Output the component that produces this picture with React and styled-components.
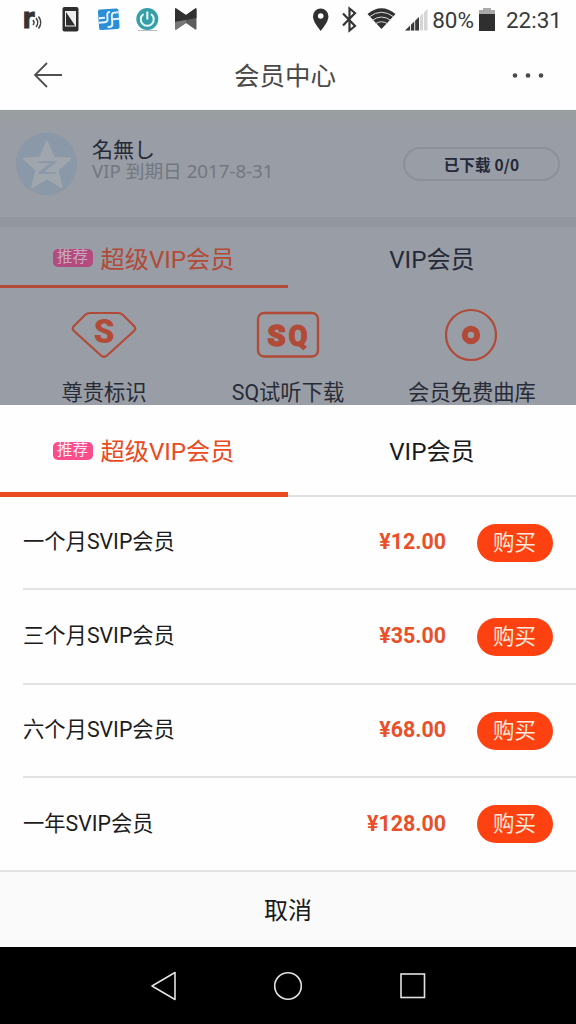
import React from 'react'
import styled, { createGlobalStyle } from 'styled-components'

const GlobalStyle = createGlobalStyle`
  * { box-sizing: border-box; }
  body {
    margin: 0;
    background: #000;
    font-family: Roboto, "Noto Sans CJK SC", sans-serif;
  }
  svg { display: block; }
`

const Phone = styled.div`
  width: 576px;
  height: 1024px;
  display: flex;
  flex-direction: column;
  overflow: hidden;
  background: #fefefe;
`

const StatusBar = styled.div`
  height: 40px;
  flex: none;
  display: flex;
  align-items: center;
  justify-content: space-between;
  color: #3a3a3a;
`

const TitleBar = styled.header`
  height: 70px;
  flex: none;
  display: grid;
  grid-template-columns: 96px 1fr 96px;
  align-items: center;
  justify-items: center;
  border-bottom: 1px solid #f3f6f8;
  h1 {
    margin: 3px 0 0 -6px;
    font-size: 25.5px;
    font-weight: 400;
    line-height: 36px;
    color: #4a4a4a;
  }
`

const StatusText = styled.span`
  font-size: 22.5px;
  line-height: 40px;
`

const StatusRight = styled.div`
  display: flex;
  align-items: center;
  padding-right: 14px;
`

const Dimmed = styled.section`
  height: 295px;
  flex: none;
  overflow: hidden;
  background: linear-gradient(#98a09f, #9a9ea2 10px, #999da5 20px);
`

const Profile = styled.div`
  height: 107px;
  display: flex;
  align-items: center;
  padding: 0 16px;
`

const Names = styled.div`
  flex: 1;
  margin: -9px 0 0 14px;
  font-family: "Noto Sans CJK JP", sans-serif;
  .name {
    font-size: 21px;
    line-height: 23px;
    color: #262a38;
  }
  .expire {
    font-family: "Noto Sans", "Noto Sans CJK JP", sans-serif;
    font-size: 18.7px;
    line-height: 22px;
    color: #727880;
  }
`

const Downloaded = styled.div`
  width: 157px;
  height: 34px;
  border: 2px solid #8c9099;
  border-radius: 17px;
  text-align: center;
  font: bold 15.5px/31px "Noto Sans CJK SC", sans-serif;
  letter-spacing: 0.2px;
  color: #23283a;
`

const Band = styled.div`
  height: 10px;
  background: #92969f;
`

const Tabs = styled.div`
  display: grid;
  grid-template-columns: 1fr 1fr;
  height: ${p => p.$height}px;
  border-bottom: ${p => (p.$line ? '2px solid #e0e0e0' : 'none')};
`

const Tab = styled.div`
  display: flex;
  align-items: center;
  justify-content: center;
  gap: 7px;
  font-size: 24.2px;
  padding-top: ${p => p.$drop || 0}px;
  padding-bottom: ${p => p.$lift || 0}px;
  color: ${p => p.$color};
  border-bottom: ${p => (p.$active ? `${p.$bar}px solid ${p.$barColor}` : 'none')};
  margin-bottom: ${p => (p.$overlap ? '-2px' : '0')};
`

const Badge = styled.span`
  width: 40px;
  height: 18px;
  margin: 2px 1px 0 -1px;
  border-radius: 5px;
  background: ${p => (p.$dim ? '#b34a80' : '#fb4d8b')};
  color: ${p => (p.$dim ? '#c9a9bb' : '#ffe9f2')};
  font-size: 15.5px;
  line-height: 17px;
  text-align: center;
`

const Perks = styled.div`
  display: grid;
  grid-template-columns: 208px 160px 208px;
  padding-top: 20px;
`

const Perk = styled.div`
  display: flex;
  flex-direction: column;
  align-items: center;
  gap: 16px;
  font-size: 21.3px;
  line-height: 30px;
  white-space: nowrap;
  color: #282c38;
`

const Sheet = styled.section`
  height: 542px;
  flex: none;
  background: #fefefe;
`

const Plan = styled.div`
  height: ${p => p.$height}px;
  margin-left: 23px;
  padding-right: 23px;
  display: flex;
  align-items: center;
  border-bottom: ${p => (p.$last ? 'none' : '2px solid #e1e3e4')};
  .label {
    flex: 1;
    padding-bottom: 6px;
    font-size: 21.3px;
    color: #1c1c1c;
  }
`

const Price = styled.span`
  margin: -2px 31px 0 0;
  font-size: 21.4px;
  font-weight: 700;
  color: #e9502a;
`

const Buy = styled.button`
  width: 76px;
  height: 38px;
  padding: 0 1px 1px 0;
  border: none;
  border-radius: 19px;
  background: #fe4110;
  color: #ffeadb;
  font: 400 21.5px/37px Roboto, "Noto Sans CJK SC", sans-serif;
`

const Cancel = styled.div`
  height: 77px;
  border-top: 2px solid #e2e2e2;
  background: #fafafa;
  text-align: center;
  font-size: 24px;
  line-height: 78px;
  color: #191919;
`

const NavBar = styled.nav`
  height: 77px;
  flex: none;
  background: #000;
  display: flex;
  justify-content: center;
  align-items: center;
  gap: 94px;
`

const plans = [
  { label: '一个月SVIP会员', price: '¥12.00', height: 93 },
  { label: '三个月SVIP会员', price: '¥35.00', height: 95 },
  { label: '六个月SVIP会员', price: '¥68.00', height: 93 },
  { label: '一年SVIP会员', price: '¥128.00', height: 92 },
]

const NotificationIcons = () => (
  <svg width="220" height="40" viewBox="0 0 220 40">
    <text x="22.500" y="27.500" textLength="12" lengthAdjust="spacingAndGlyphs" fontFamily="DejaVu Sans, sans-serif" fontWeight="700" fontSize="28" fill="#333" stroke="#333">r</text>
    <g fill="none" stroke="#444" strokeWidth="1.500">
      <path d="M33 20q2 2.500 0 5M36 18q3.500 4.500 0 9M38.500 16.500q4.500 6 0 12" />
    </g>
    <rect x="62.500" y="7" width="16" height="24.500" rx="2" fill="#2e2e2e" />
    <rect x="65" y="11" width="11" height="15.500" fill="#eee" />
    <path d="M66 12 75 25.500H66z" fill="#2e2e2e" />
    <g transform="rotate(-4 109 19)">
      <rect x="98.500" y="9" width="20.500" height="20.500" rx="2" fill="#2b8fd8" />
      <path d="M119 13h-4q-3 0-3 3v8q0 3-3 3h-2M98.500 22h6q3 0 3-3v-4q0-3 3-3M99 17.500h6M113 19.500h6" fill="none" stroke="#e8f5ff" strokeWidth="1.900" />
    </g>
    <path d="M138 30.500h19" stroke="#bbb" />
    <circle cx="147.300" cy="19" r="11" fill="#359fa8" />
    <path d="M143.500 14a6.500 6.500 0 1 0 7.500 0M147.300 11.500v8" fill="none" stroke="#eafafa" strokeWidth="2" />
    <path d="M175 9.500q0-2 2-.5l9 6 8.500-6q2-1.500 2 .5v19q0 2-2 .5l-8.500-6-9 6q-2 1.500-2-.5z" fill="#5c5c5c" />
    <path d="M175 9.500q0-2 2-.5l9 6 8.500-6q2-1.500 2 .5v8.500L186 20l-11 2z" fill="#303030" />
    <path d="M175 22l11-2v3l-9 6q-2 1.500-2-.5z" fill="#777" />
  </svg>
)

const SystemIcons = () => (
  <svg width="122" height="40" viewBox="310 0 122 40">
    <path d="M320.700 31c-4-5-7.700-10-7.700-14.700a7.700 7.700 0 0 1 15.400 0C328.400 21 324.700 26 320.700 31z" fill="#303030" />
    <circle cx="320.700" cy="16" r="2.800" fill="#fefefe" />
    <path d="M343 13.500l12 12.500-5.500 4.500V8.500L355 13l-12 12.500" fill="none" stroke="#353535" strokeWidth="2.200" />
    <path d="M367.500 14q14-11.500 28 0L381.500 29z" fill="#303030" />
    <path d="M369 17q12.500-9.500 25 0M372 20.500q9.500-7 19 0M375 24q6.500-4.500 13 0" fill="none" stroke="#ddd" strokeWidth="1" />
    <path d="M405 30.500 427.500 9v21.500z" fill="#d6d6d6" />
    <path d="M405 30.500 419 17v13.500z" fill="#3a3a3a" />
    <path d="M410.500 20v11M414.700 16v15M419.500 12v19M423.500 9v22" stroke="#fefefe" strokeWidth="0.900" />
  </svg>
)

const Battery = styled.svg`
  margin: 0 10px 0 5px;
`

const Avatar = () => (
  <svg width="62" height="64" viewBox="0 0 62 64">
    <ellipse cx="30.500" cy="32" rx="30.500" ry="31.500" fill="#8b98a8" />
    <path d="M31 10l6.500 15.500 16.500 1.200-12.500 11.500 4 17L31 46.500 16 55.200l4.500-17L8 26.700l16-1.200z" fill="#9fa6ad" stroke="#9fa6ad" strokeWidth="2" strokeLinejoin="round" />
    <text x="31" y="42" textAnchor="middle" textLength="20" lengthAdjust="spacingAndGlyphs" fontFamily="Roboto, sans-serif" fontSize="18" fontWeight="500" fill="#8b98a8">Z</text>
  </svg>
)

const perkRed = '#b24a38'

const DiamondIcon = () => (
  <svg width="66" height="54" viewBox="0 0 66 54">
    <path d="M19 5h28q3 0 5 2l11 11q2.500 2.500 0 5L36 47.500q-3 2.500-6 0L3 23q-2.500-2.500 0-5L14 7q2-2 5-2z" fill="none" stroke={perkRed} strokeWidth="2.200" />
    <text x="33" y="35" textAnchor="middle" fontFamily="Roboto, sans-serif" fontWeight="900" fontSize="33" fill={perkRed}>S</text>
  </svg>
)

const SqIcon = () => (
  <svg width="64" height="54" viewBox="0 0 64 54">
    <rect x="2" y="5" width="60" height="43.500" rx="6" fill="none" stroke={perkRed} strokeWidth="2.400" />
    <text x="11.500" y="37.500" textLength="18" lengthAdjust="spacingAndGlyphs" fontFamily="Roboto, sans-serif" fontWeight="900" fontSize="29" fill={perkRed} stroke={perkRed} strokeWidth="1.500">S</text>
    <text x="32.500" y="37.500" textLength="19" lengthAdjust="spacingAndGlyphs" fontFamily="Roboto, sans-serif" fontWeight="900" fontSize="29" fill={perkRed} stroke={perkRed}>Q</text>
  </svg>
)

const DiscIcon = () => (
  <svg width="54" height="54" viewBox="0 0 54 54">
    <circle cx="26" cy="27" r="25" fill="none" stroke={perkRed} strokeWidth="2.200" />
    <circle cx="26" cy="27" r="6.200" fill="none" stroke={perkRed} strokeWidth="6" />
  </svg>
)

const App = () => {
  return (
    <>
      <GlobalStyle />
      <Phone>
        <StatusBar>
          <NotificationIcons />
          <StatusRight>
            <SystemIcons />
            <StatusText>80%</StatusText>
            <Battery width="17" height="40" viewBox="0 0 17 40">
              <path d="M4 8h8v2h4v5H0v-5h4z" fill="#aaa" />
              <path d="M0 14h16v17H0z" fill="#2f2f2f" />
            </Battery>
            <StatusText>22:31</StatusText>
          </StatusRight>
        </StatusBar>
        <TitleBar>
          <svg width="30" height="28" viewBox="0 0 30 28" fill="none" stroke="#505050" strokeWidth="1.800">
            <path d="M29 14H2M14 2 2 14l12 12" />
          </svg>
          <h1>会员中心</h1>
          <svg width="32" height="8" viewBox="0 0 32 8" fill="#4a4a4a">
            <circle cx="3" cy="4.500" r="2.300" />
            <circle cx="16" cy="4.500" r="2.300" />
            <circle cx="29" cy="4.500" r="2.300" />
          </svg>
        </TitleBar>
        <Dimmed>
          <Profile>
            <Avatar />
            <Names>
              <div className='name'>名無し</div>
              <div className='expire'>VIP 到期日 2017-8-31</div>
            </Names>
            <Downloaded>已下载 0/0</Downloaded>
          </Profile>
          <Band />
          <Tabs $height={61}>
            <Tab $active $drop={2} $bar={3} $barColor='#b24a38' $color='#b24a38'>
              <Badge $dim>推荐</Badge>
              超级VIP会员
            </Tab>
            <Tab $color='#262a38' $lift={1}>VIP会员</Tab>
          </Tabs>
          <Perks>
            <Perk><DiamondIcon />尊贵标识</Perk>
            <Perk><SqIcon />SQ试听下载</Perk>
            <Perk><DiscIcon />会员免费曲库</Perk>
          </Perks>
        </Dimmed>
        <Sheet>
          <Tabs $height={92} $line>
            <Tab $active $drop={2} $overlap $bar={5} $barColor='#ea4a1f' $color='#ea4a1f'>
              <Badge>推荐</Badge>
              超级VIP会员
            </Tab>
            <Tab $color='#1a1a1a' $lift={2}>VIP会员</Tab>
          </Tabs>
          {plans.map((plan, i) => (
            <Plan key={plan.label} $height={plan.height} $last={i === plans.length - 1}>
              <span className='label'>{plan.label}</span>
              <Price>{plan.price}</Price>
              <Buy>购买</Buy>
            </Plan>
          ))}
          <Cancel>取消</Cancel>
        </Sheet>
        <NavBar>
          <svg width="30" height="30" viewBox="0 0 30 30" fill="none" stroke="#e2e2e2" strokeWidth="1.600">
            <path d="M26 1.500v27L3 15z" strokeLinejoin="round" />
          </svg>
          <svg width="30" height="30" viewBox="0 0 30 30" fill="none" stroke="#e2e2e2" strokeWidth="1.600">
            <circle cx="15" cy="15" r="13.300" />
          </svg>
          <svg width="30" height="30" viewBox="0 0 30 30" fill="none" stroke="#e2e2e2" strokeWidth="1.600">
            <rect x="4" y="3" width="23.500" height="23.500" />
          </svg>
        </NavBar>
      </Phone>
    </>
  )
}

export default App
